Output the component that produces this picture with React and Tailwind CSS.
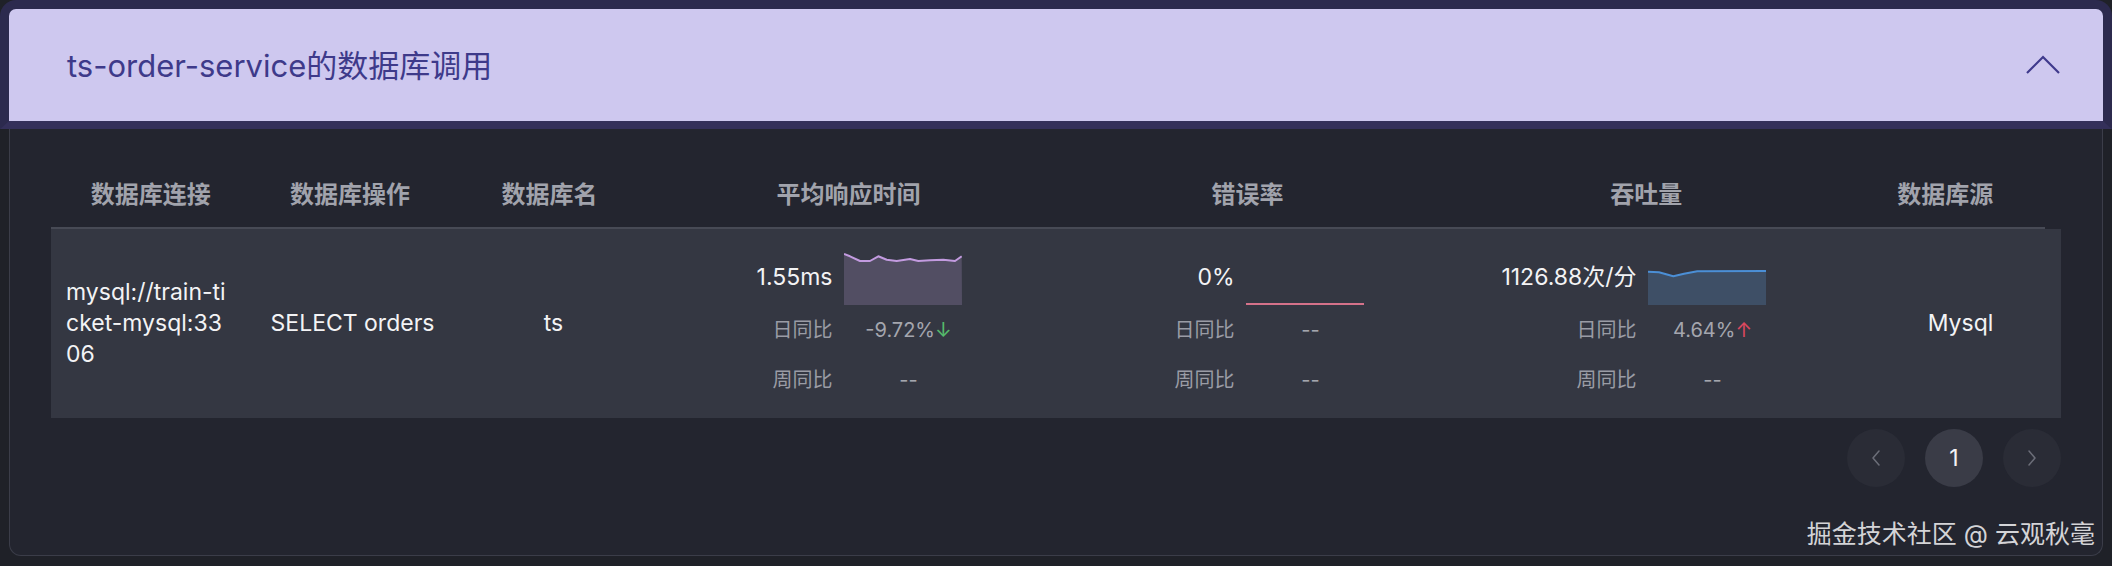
import React from 'react';

const columns = [
  { key: 'conn', label: '数据库连接' },
  { key: 'op', label: '数据库操作' },
  { key: 'name', label: '数据库名' },
  { key: 'rt', label: '平均响应时间' },
  { key: 'err', label: '错误率' },
  { key: 'tp', label: '吞吐量' },
  { key: 'src', label: '数据库源' },
];

const rtLine = [
  [0, 1], [6, 3.3], [16, 8], [26, 8], [34.3, 3.3], [42.7, 6.7], [52.7, 8], [66, 6],
  [74.3, 8], [86, 7.3], [99.3, 6.7], [111, 8], [117.7, 3.3],
];
const tpLine = [
  [0, 18.7], [11, 19.3], [25.3, 23.3], [36, 20.7], [49.3, 18.3], [118, 18],
];

const Spark = ({ points, fill, stroke }) => {
  const line = points.map(([x, y], i) => `${i ? 'L' : 'M'}${x} ${y}`).join(' ');
  return (
    <svg width="118" height="52" viewBox="0 0 118 52" className="block">
      {fill && <path d={`${line} L118 52 L0 52 Z`} fill={fill} />}
      <path d={line} fill="none" stroke={stroke} strokeWidth="2" strokeLinejoin="round" />
    </svg>
  );
};

const FlatLine = () => (
  <svg width="118" height="52" viewBox="0 0 118 52" className="block">
    <path d="M0 51 L118 51" stroke="#d5728a" strokeWidth="2" />
  </svg>
);

const Metric = ({ value, chart, day, week }) => (
  <div className="flex justify-center pt-[11px]">
    <div className="grid grid-cols-[96px_130px] gap-x-[11px]">
      <div className="flex justify-end items-center h-[52px] pb-[4px] whitespace-nowrap text-[23px] text-[#f3f3f5]">
        {value}
      </div>
      <div className="h-[52px]">{chart}</div>
      <div className="flex justify-end items-center h-[50px] whitespace-nowrap text-[20px] text-[#9a9ca5]">日同比</div>
      <div className="flex justify-center items-center h-[50px] whitespace-nowrap text-[20px] text-[#a4a6ae]">{day}</div>
      <div className="flex justify-end items-center h-[50px] whitespace-nowrap text-[20px] text-[#9a9ca5]">周同比</div>
      <div className="flex justify-center items-center h-[50px] whitespace-nowrap text-[20px] text-[#a4a6ae]">{week}</div>
    </div>
  </div>
);

const Chevron = ({ dir }) => (
  <svg width="10" height="16" viewBox="0 0 10 16">
    <path
      d={dir === 'left' ? 'M8 1 L2 8 L8 15' : 'M2 1 L8 8 L2 15'}
      fill="none"
      stroke="#6c6e79"
      strokeWidth="1.5"
      strokeLinecap="round"
      strokeLinejoin="round"
    />
  </svg>
);

export default function App() {
  return (
    <div className="relative w-[2112px] h-[566px] bg-[#1f2128] font-[Inter,'Noto_Sans_CJK_SC',sans-serif] overflow-hidden">
      <header className="h-[129px] bg-[#cec8ef] border-[9px] border-b-[8px] border-[#2c2a4e] border-b-[#34305a] rounded-t-[16px] flex items-center justify-between pl-[58px] pr-[42px]">
        <h1 className="text-[31px] text-[#3e3a8a] leading-none">ts-order-service的数据库调用</h1>
        <svg width="36" height="20" viewBox="0 0 36 20">
          <path d="M2 18 L18 2 L34 18" fill="none" stroke="#3f3a8c" strokeWidth="2.2" />
        </svg>
      </header>

      <div className="mx-[9px] h-[427px] bg-[#23252f] border border-t-0 border-[#3b3d49] rounded-b-[12px] px-[41px] pt-[34px]">
        <div className="w-[1994px] h-[66px] grid grid-cols-[2fr_2fr_2fr_4fr_4fr_4fr_2fr] items-center border-b-2 border-[#474a55]">
          {columns.map((c) => (
            <div key={c.key} className="text-center text-[24px] font-semibold text-[#a1a3ac]">
              {c.label}
            </div>
          ))}
        </div>

        <div className="h-[189px] bg-[#343742] grid grid-cols-[2fr_2fr_2fr_4fr_4fr_4fr_2fr] items-center text-[23px] text-[#f3f3f5]">
          <div className="pl-[15px] pr-[16px] leading-[31px] break-all">mysql://train-ticket-mysql:3306</div>
          <div className="text-center">SELECT orders</div>
          <div className="text-center">ts</div>
          <Metric
            value="1.55ms"
            chart={<Spark points={rtLine} fill="#524e63" stroke="#c39be0" />}
            day={<span>-9.72%<span className="text-[#55b96b]">↓</span></span>}
            week="--"
          />
          <Metric value="0%" chart={<FlatLine />} day="--" week="--" />
          <Metric
            value="1126.88次/分"
            chart={<Spark points={tpLine} fill="#3e4f66" stroke="#4b8fd6" />}
            day={<span>4.64%<span className="text-[#d9485f]">↑</span></span>}
            week="--"
          />
          <div className="text-center">Mysql</div>
        </div>

        <div className="flex justify-end gap-[20px] mt-[11px]">
          <button className="w-[58px] h-[58px] rounded-full bg-[#2a2c36] flex items-center justify-center">
            <Chevron dir="left" />
          </button>
          <button className="w-[58px] h-[58px] rounded-full bg-[#3a3c47] flex items-center justify-center text-[23px] text-[#f3f3f5]">
            1
          </button>
          <button className="w-[58px] h-[58px] rounded-full bg-[#2a2c36] flex items-center justify-center">
            <Chevron dir="right" />
          </button>
        </div>
      </div>

      <div className="absolute right-[17px] top-[515px] text-[25px] text-[#d4d4d7] leading-[38px] whitespace-nowrap">
        掘金技术社区 @ 云观秋毫
      </div>
    </div>
  );
}
